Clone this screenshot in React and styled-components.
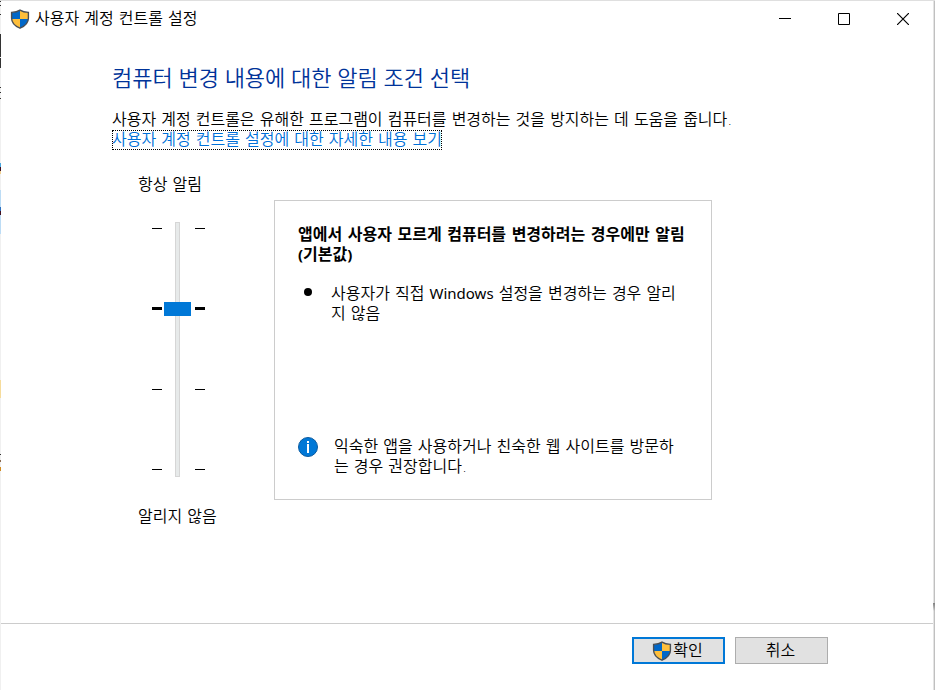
import React, { useState } from "react";
import styled, { createGlobalStyle } from "styled-components";

const GlobalStyle = createGlobalStyle`
  * {
    box-sizing: border-box;
  }
  body {
    margin: 0;
    background: #ffffff;
    color: #000000;
    font: 350 16px/20px "DejaVu Sans", "Noto Sans CJK KR", sans-serif;
  }
`;

const Window = styled.div`
  display: flex;
  min-height: 100vh;
  border-top: 1px solid #dfdfdf;
`;
const LeftEdge = styled.div`
  flex: none;
  width: 1px;
  background: linear-gradient(
    #333333 1px,
    #f0f0f0 1px 4px,
    #333333 4px 5px,
    #f0f0f0 5px 13px,
    #333333 13px 14px,
    #f0f0f0 14px 33px,
    #333333 33px 56px,
    #f0f0f0 56px 57px,
    #333333 57px 67px,
    #f0f0f0 67px 86px,
    #333333 86px 87px,
    #f0f0f0 87px 91px,
    #333333 91px 92px,
    #f0f0f0 92px 97px,
    #333333 97px 98px,
    #f0f0f0 98px 162px,
    #4aa8e0 162px 166px,
    #401020 166px 170px,
    #f0d090 170px 173px,
    #f0f0f0 173px 189px,
    #bcdcf5 189px 206px,
    #2a6fc0 206px 210px,
    #401020 210px 214px,
    #bcdcf5 214px 233px,
    #f0f0f0 233px 379px,
    #f6dc9c 379px 397px,
    #f0f0f0 397px 453px,
    #333333 453px 454px,
    #f0f0f0 454px 459px,
    #8a6a50 459px 461px,
    #f0f0f0 461px 466px,
    #d08a20 466px 470px,
    #f0f0f0 470px
  );
`;
const RightEdge = styled.div`
  flex: none;
  width: 2px;
  background: linear-gradient(
      transparent 602px,
      #808080 602px,
      transparent 610px
    ),
    linear-gradient(90deg, #e4e4e4 1px, #c0c0c0 1px);
`;
const Dialog = styled.div`
  flex: 1;
  min-width: 0;
  display: flex;
  flex-direction: column;
`;

const TitleBar = styled.header`
  display: flex;
  align-items: center;
  height: 36px;
  padding: 0 1px 0 9px;
`;
const Title = styled.h1`
  flex: 1;
  margin: 0;
  padding-left: 5px;
  font-size: 16px;
  font-weight: 350;
`;
const CaptionButton = styled.button`
  display: flex;
  align-items: center;
  justify-content: center;
  width: 59px;
  height: 36px;
  padding: 0;
  border: 0;
  background: transparent;
`;

const Content = styled.main`
  flex: 1;
  padding: 25px 24px 24px 111px;
`;
const Heading = styled.h2`
  margin: 0 0 18px;
  color: #003399;
  font: 350 22px/30px "Open Sans", "Noto Sans CJK KR", sans-serif;
`;
const Intro = styled.p`
  margin: 0;
`;
const HelpLink = styled.a`
  display: inline-block;
  outline: 1px dotted #000000;
  outline-offset: -1px;
  color: #0070d8;
  text-decoration: none;
`;
const Settings = styled.div`
  display: flex;
  align-items: flex-start;
  padding: 25px 0 0 26px;
`;

const Levels = styled.div`
  flex: none;
  width: 136px;
`;
const LevelLabel = styled.label`
  display: block;
`;
const SliderRow = styled.div`
  display: grid;
  grid-template-columns: 12px 31px 10px;
  height: 255px;
  margin: 27px 0 30px 14px;
`;
const Ticks = styled.div`
  display: flex;
  flex-direction: column;
  justify-content: space-between;
  width: 10px;
  padding: 5px 0 6px;
`;
const Tick = styled.span`
  display: flex;
  align-items: center;
  height: 3px;

  &::before {
    content: "";
    width: 10px;
    height: ${(props) => (props.$active ? "3px" : "1px")};
    background: #000000;
  }
`;
const Slider = styled.input`
  appearance: none;
  writing-mode: vertical-lr;
  width: 27px;
  height: 255px;
  margin: 0;
  background: linear-gradient(#e7eaea, #e7eaea) center / 3px 253px no-repeat,
    linear-gradient(#d6d6d6, #d6d6d6) center / 5px 255px no-repeat;

  &::-webkit-slider-thumb {
    appearance: none;
    width: 27px;
    height: 14px;
    border: 0;
    border-radius: 0;
    background: #0078d7;
  }
`;

const Panel = styled.section`
  display: flex;
  flex: 1;
  flex-direction: column;
  max-width: 438px;
  min-height: 300px;
  margin-top: 25px;
  padding: 24px 23px 22px;
  border: 1px solid #cccccc;
`;
const PanelTitle = styled.h3`
  margin: 0 0 19px;
  font-size: 16px;
  font-weight: 700;
`;
const Latin = styled.span`
  font-family: "Noto Sans", "Open Sans", sans-serif;
  font-size: 15px;
  font-weight: ${(props) => (props.$bold ? 700 : 400)};
  line-height: 16px;
`;
const Effects = styled.ul`
  flex: 1;
  margin: 0;
  padding: 0 8px 0 6px;
  list-style: none;
`;
const Effect = styled.li`
  display: flex;
  gap: 19px;

  &::before {
    content: "";
    flex: none;
    width: 8px;
    height: 8px;
    margin-top: 4px;
    border-radius: 50%;
    background: #000000;
  }
`;
const Advice = styled.div`
  display: flex;
  gap: 16px;
  padding-right: 8px;
`;
const AdviceText = styled.p`
  flex: 1;
  margin: 0;
`;

const Footer = styled.footer`
  display: flex;
  justify-content: flex-end;
  gap: 10px;
  height: 67px;
  padding: 13px 105px 0 0;
  border-top: 1px solid #cccccc;
`;
const Button = styled.button`
  display: flex;
  align-items: center;
  justify-content: center;
  gap: 1px;
  width: 93px;
  height: 27px;
  padding: 0 2px 0 0;
  border: ${(props) =>
    props.$primary ? "2px solid #0078d7" : "1px solid #adadad"};
  background: #e1e1e1;
  color: #000000;
  font: inherit;
`;

const Icon = styled.svg`
  display: block;
  flex: none;
`;

const SHIELD =
  "M10 1.2C7.6 2.7 4.6 3.3 1.6 3.4v5.8c0 4.8 3.4 7.8 8.4 10 5-2.2 8.4-5.2 8.4-10V3.4C15.4 3.3 12.4 2.7 10 1.2z";

function ShieldIcon() {
  return (
    <Icon width="20" height="20" viewBox="0 0 20 20" aria-hidden="true">
      <clipPath id="shield">
        <path d={SHIELD} />
      </clipPath>
      <g clipPath="url(#shield)">
        <path fill="#0067c8" d="M0 0h10v10H0zM10 10h10v10H10z" />
        <path fill="#ffbf3b" d="M10 0h10v10H10zM0 10h10v10H0z" />
      </g>
      <path fill="none" stroke="#4a4f55" strokeWidth="1.4" d={SHIELD} />
    </Icon>
  );
}

function InfoIcon() {
  return (
    <Icon width="20" height="20" viewBox="0 0 20 20" aria-hidden="true">
      <circle cx="10" cy="10" r="9.5" fill="#0078d7" stroke="#0a5ba0" />
      <path fill="#ffffff" d="M9 4h2v2H9zM9 7h2v9H9z" />
    </Icon>
  );
}

const LEVELS = [0, 1, 2, 3];

function TickMarks({ level }) {
  return (
    <Ticks aria-hidden="true">
      {LEVELS.map((n) => (
        <Tick key={n} $active={n === level} />
      ))}
    </Ticks>
  );
}

export default function App() {
  const [level, setLevel] = useState(1);

  return (
    <>
      <GlobalStyle />
      <Window lang="ko">
        <LeftEdge />
        <Dialog>
          <TitleBar>
            <ShieldIcon />
            <Title>사용자 계정 컨트롤 설정</Title>
            <CaptionButton type="button" aria-label="최소화">
              <Icon width="12" height="12" viewBox="0 0 12 12">
                <path fill="#000000" d="M0 5h12v1H0z" />
              </Icon>
            </CaptionButton>
            <CaptionButton type="button" aria-label="최대화">
              <Icon width="12" height="12" viewBox="0 0 12 12">
                <path fill="none" stroke="#000000" d="M.5.5h11v11H.5z" />
              </Icon>
            </CaptionButton>
            <CaptionButton type="button" aria-label="닫기">
              <Icon width="12" height="12" viewBox="0 0 12 12">
                <path
                  stroke="#000000"
                  strokeWidth="1.2"
                  d="M0 0l12 12M12 0L0 12"
                />
              </Icon>
            </CaptionButton>
          </TitleBar>

          <Content>
            <Heading>컴퓨터 변경 내용에 대한 알림 조건 선택</Heading>
            <Intro>
              사용자 계정 컨트롤은 유해한 프로그램이 컴퓨터를 변경하는 것을
              방지하는 데 도움을 줍니다.
            </Intro>
            <HelpLink href="#help">
              사용자 계정 컨트롤 설정에 대한 자세한 내용 보기
            </HelpLink>

            <Settings>
              <Levels>
                <LevelLabel htmlFor="level">항상 알림</LevelLabel>
                <SliderRow>
                  <TickMarks level={level} />
                  <Slider
                    id="level"
                    type="range"
                    min="0"
                    max="3"
                    value={level}
                    onChange={(e) => setLevel(Number(e.target.value))}
                  />
                  <TickMarks level={level} />
                </SliderRow>
                <LevelLabel htmlFor="level">알리지 않음</LevelLabel>
              </Levels>

              <Panel>
                <PanelTitle>
                  앱에서 사용자 모르게 컴퓨터를 변경하려는 경우에만 알림{" "}
                  <Latin $bold>(</Latin>기본값<Latin $bold>)</Latin>
                </PanelTitle>
                <Effects>
                  <Effect>
                    <span>
                      사용자가 직접 <Latin>Windows</Latin> 설정을 변경하는 경우
                      알리지 않음
                    </span>
                  </Effect>
                </Effects>
                <Advice>
                  <InfoIcon />
                  <AdviceText>
                    익숙한 앱을 사용하거나 친숙한 웹 사이트를 방문하는 경우
                    권장합니다.
                  </AdviceText>
                </Advice>
              </Panel>
            </Settings>
          </Content>

          <Footer>
            <Button type="button" $primary>
              <ShieldIcon />
              확인
            </Button>
            <Button type="button">취소</Button>
          </Footer>
        </Dialog>
        <RightEdge />
      </Window>
    </>
  );
}
